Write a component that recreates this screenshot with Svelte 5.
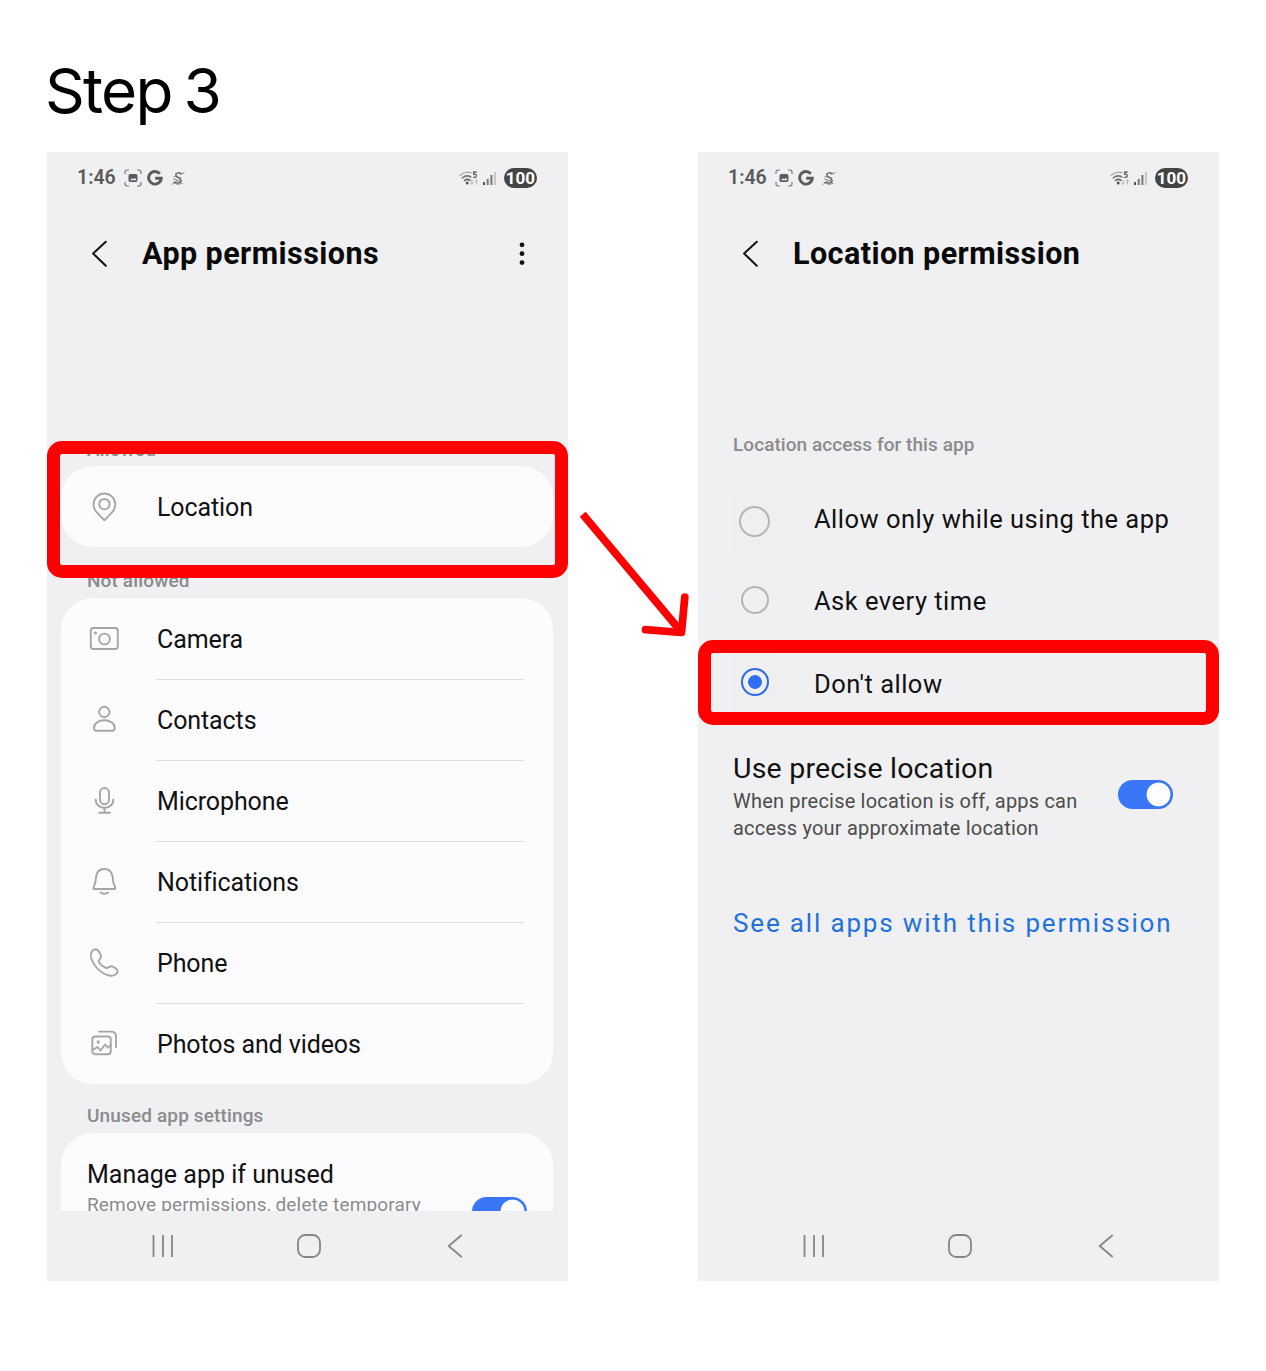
<script>
  const denied = [
    { icon: 'camera', label: 'Camera' },
    { icon: 'contacts', label: 'Contacts' },
    { icon: 'microphone', label: 'Microphone' },
    { icon: 'bell', label: 'Notifications' },
    { icon: 'phone', label: 'Phone' },
    { icon: 'photos', label: 'Photos and videos' }
  ];
</script>

{#snippet statusBar()}
  <div class="status">
    <span class="time">1:46</span>
    <svg class="shot" width="18" height="18" viewBox="0 0 18 18" fill="none" stroke="#777" stroke-width="1.2">
      <path d="M1 5V3.200Q1 1 3.200 1H5M13 1h1.800Q17 1 17 3.200V5M17 13v1.800Q17 17 14.800 17H13M5 17H3.200Q1 17 1 14.800V13" />
      <rect x="4.500" y="5" width="9" height="8" rx="1.800" fill="#5b5b5b" stroke="none" />
      <path d="M6 11.200l2-2 1.300 1.100 1.500-1.500 1.700 2.400z" fill="#f0f0f2" stroke="none" />
    </svg>
    <svg class="google" width="16" height="16" viewBox="0 0 16 16" fill="none" stroke="#5b5b5b" stroke-width="2.900">
      <path d="M12.800 3.700A6.300 6.300 0 1 0 14.300 8.200H8.200" />
    </svg>
    <svg class="script-s" width="14" height="15" viewBox="0 0 14 15" fill="none" stroke="#6b6b6b" stroke-linecap="round">
      <path d="M10 3C8.500 1.300 5 1.500 4.700 3.700S9.800 6.700 10 9.300 6.500 12.800 3 11.500" stroke-width="1.500" />
      <path d="M1 13.500Q3.500 10 6.500 9.800M2.500 8l8 2.500M9 2.500l4-.5M3 5.500l7 1.500M6 13.500l5-1" stroke-width=".8" />
    </svg>
    <span class="grow"></span>
    <svg class="wifi" width="21" height="15" viewBox="0 0 21 15" fill="none" stroke-linecap="round">
      <path d="M1 4.500Q6.500-.5 12 1.800" stroke="#a5a5a5" stroke-width="1.300" />
      <path d="M3.300 7Q7.500 3.300 11.800 6" stroke="#777" stroke-width="1.500" />
      <path d="M5.500 9.500Q8.200 7.300 11 9.400" stroke="#666" stroke-width="1.500" />
      <circle cx="8.200" cy="12" r="1.500" fill="#555" />
      <path d="M17.300 1H14.700V3.300Q17.400 2.900 17.400 4.800T14.400 6.300" stroke="#666" stroke-width="1.300" />
      <path d="M13 9v4M11.600 11.800L13 13.300l1.400-1.500M17.500 13.300V9M16.100 10.300L17.500 8.800l1.400 1.500" stroke="#b5b5b5" stroke-width="1" />
    </svg>
    <svg class="signal" width="14" height="15" viewBox="0 0 14 15">
      <rect x="0" y="11" width="2" height="3" fill="#555" />
      <rect x="3.700" y="8" width="2" height="6" fill="#777" />
      <rect x="7.400" y="4" width="2" height="10" fill="#777" />
      <rect x="11" y="1" width="2" height="13" fill="#c6c6c8" />
    </svg>
    <span class="battery">100</span>
  </div>
{/snippet}

{#snippet header(title, menu)}
  <div class="header">
    <svg class="back" width="18" height="30" viewBox="0 0 18 30" fill="none" stroke="#111" stroke-width="2" stroke-linecap="round" stroke-linejoin="round">
      <path d="M14.800 2.800L2.100 14.500l12.700 12.200" />
    </svg>
    <h2>{title}</h2>
    {#if menu}
      <svg class="menu" width="6" height="24" viewBox="0 0 6 24" fill="#111">
        <circle cx="3" cy="2.800" r="2.400" /><circle cx="3" cy="11.700" r="2.400" /><circle cx="3" cy="20.600" r="2.400" />
      </svg>
    {/if}
  </div>
{/snippet}

{#snippet navBar()}
  <div class="nav">
    <svg width="24" height="26" viewBox="0 0 24 26" stroke="#858585" stroke-width="1.800"><path d="M2.500 2v22M12 2v22M21 2v22" /></svg>
    <svg width="26" height="26" viewBox="0 0 26 26" fill="none" stroke="#858585" stroke-width="1.800"><rect x="2" y="2" width="22" height="22" rx="7.500" /></svg>
    <svg width="26" height="26" viewBox="0 0 26 26" fill="none" stroke="#858585" stroke-width="1.800"><path d="M19.700 2L6.700 13l13 11" /></svg>
  </div>
{/snippet}

{#snippet icon(name)}
  <svg class="icon" width="32" height="32" viewBox="0 0 32 32" fill="none" stroke="#a6a6a8" stroke-width="1.900" stroke-linecap="round" stroke-linejoin="round">
    {#if name === 'location'}
      <path d="M16.400 30.300L8.400 21.800A10.900 10.900 0 1 1 24.400 21.800Z" />
      <circle cx="16.400" cy="14.200" r="5.200" />
    {:else if name === 'camera'}
      <rect x="2.800" y="6" width="27" height="21" rx="2.500" />
      <circle cx="16.500" cy="17" r="5.400" /><circle cx="7.500" cy="11" r=".6" fill="#a6a6a8" />
    {:else if name === 'contacts'}
      <circle cx="16.300" cy="9" r="5.200" />
      <path d="M16.300 17.300C10.300 17.300 6 20.500 6 25Q6 27.700 8.500 27.700H24Q26.800 27.700 26.800 25C26.800 20.500 22.300 17.300 16.300 17.300Z" />
    {:else if name === 'microphone'}
      <rect x="12" y="4" width="9" height="16.200" rx="4.500" />
      <path d="M7.700 15.500C7.700 26.500 25.300 26.500 25.300 15.500M16.500 23.700v5M11.300 28.700h10.500" />
    {:else if name === 'bell'}
      <path d="M16.300 4C10.800 4 8.300 8 8 12.500C7.800 18 6.500 19.500 5.500 22.500Q5 24 6.300 24H26.500Q27.700 24 27.200 22.500C26 19.500 24.900 18 24.700 12.500C24.400 8 21.800 4 16.300 4Z" />
      <path d="M12.500 27.500Q16.400 30 20.200 27.500" />
    {:else if name === 'phone'}
      <path d="M8 3.300C4 3.500 2 7.500 3 11.500C5.700 20.500 13.200 28 22.200 29.700C26.200 30.200 29.200 28.200 29.600 25.500C29.800 24 28.700 23 27.700 22.400L24.500 20.500C22 19 20.500 22.600 18.200 22C14.500 20.500 12.200 18.300 10.800 15.600C10.200 13.800 13.200 13 13 10.500C12.700 8.500 10.500 3.500 8 3.300Z" />
    {:else}
      <rect x="4.300" y="9.500" width="18.500" height="17.800" rx="3" />
      <path d="M11 4.600H22.800Q28 4.600 28 9.500V20M5 22.800L9.500 20 12.500 23.500 17.200 17.500 19.700 20.500 22.500 18.500" /><circle cx="10.200" cy="15" r=".7" fill="#a6a6a8" />
    {/if}
  </svg>
{/snippet}

<main>
  <h1>Step 3</h1>
  <div class="phones">
    <section class="phone">
      {@render statusBar()}
      {@render header('App permissions', true)}
      <div class="scroll">
        <div class="label allowed">Allowed</div>
        <div class="card">
          <div class="row">{@render icon('location')}<div class="cell">Location</div></div>
        </div>
        <div class="label not-allowed">Not allowed</div>
        <div class="card">
          {#each denied as item}
            <div class="row">{@render icon(item.icon)}<div class="cell">{item.label}</div></div>
          {/each}
        </div>
        <div class="label unused">Unused app settings</div>
        <div class="card manage">
          <div>
            <div class="manage-title">Manage app if unused</div>
            <div class="manage-sub">Remove permissions, delete temporary</div>
          </div>
          <span class="toggle"></span>
        </div>
      </div>
      {@render navBar()}
      <div class="highlight location-box"></div>
    </section>

    <section class="phone">
      {@render statusBar()}
      {@render header('Location permission', false)}
      <div class="scroll">
        <div class="label access">Location access for this app</div>
        <div class="option first"><span class="radio-cell tinted"><span class="radio large"></span></span><span>Allow only while using the app</span></div>
        <div class="option second"><span class="radio-cell"><span class="radio"></span></span><span>Ask every time</span></div>
        <div class="option third"><span class="radio-cell tinted"><span class="radio on"></span></span><span>Don't allow</span></div>
        <div class="precise">
          <div>
            <div class="precise-title">Use precise location</div>
            <div class="precise-sub">When precise location is off, apps can<br />access your approximate location</div>
          </div>
          <span class="toggle"></span>
        </div>
        <div class="link">See all apps with this permission</div>
      </div>
      {@render navBar()}
      <div class="highlight deny-box"></div>
    </section>
  </div>
  <svg class="arrow" width="120" height="140" viewBox="575 505 120 140" fill="none" stroke="#f00" stroke-width="7.700">
    <path d="M582.700 514.200L681 631.500" />
    <path d="M645.500 629.700L681.500 632.500L684.800 597" stroke-linecap="round" stroke-linejoin="round" />
  </svg>
</main>

<style>
  :global(body) { background: #fff; }
  main { position: relative; width: 1266px; height: 1371px; overflow: hidden; font-family: Roboto, "Liberation Sans", sans-serif; color: #111; }
  h1, h2 { margin: 0; }
  h1 { box-sizing: border-box; height: 152px; padding: 53px 0 0 45px; font: 400 62px/75px Inter, sans-serif; letter-spacing: -1.700px; word-spacing: -4px; color: #000; }
  .phones { display: flex; gap: 130px; padding-left: 47px; }
  .phone { position: relative; display: flex; flex-direction: column; width: 521px; height: 1129px; background: #f0f0f2; white-space: nowrap; }
  .status { display: flex; align-items: center; height: 52px; padding: 0 31px 0 30px; box-sizing: border-box; color: #5b5b5b; }
  .time { width: 47px; font-size: 19.500px; font-weight: 600; line-height: 24px; }
  .shot { margin-right: 5px; }
  .google { margin-right: 8px; }
  .grow { flex: 1; }
  .wifi { margin-right: 3px; }
  .signal { margin-right: 7px; }
  .battery { width: 33px; height: 20px; border-radius: 10px; background: #444; color: #fff; font-size: 17px; font-weight: 700; line-height: 20px; text-align: center; }
  .header { display: flex; align-items: center; height: 100px; padding: 0 43px 0 44px; }
  .back { margin-right: 33px; }
  h2 { flex: 1; font-size: 30.500px; font-weight: 700; line-height: 40px; letter-spacing: .43px; color: #0a0a0a; }
  .scroll { flex: 1; min-height: 0; overflow: hidden; }
  .label { box-sizing: border-box; padding-left: 40px; font-size: 19px; font-weight: 500; letter-spacing: .14px; line-height: 24px; color: #8b8b8d; }
  .allowed { height: 162px; padding-top: 134px; }
  .not-allowed { height: 51px; padding-top: 22px; }
  .unused { height: 49px; padding-top: 20px; }
  .card { margin: 0 15px 0 14px; border-radius: 32px; background: #fcfcfe; }
  .row { display: flex; align-items: center; height: 81px; padding: 0 29px 0 27px; }
  .icon { margin: -2px 36px 0 0; }
  .cell { flex: 1; height: 81px; box-sizing: border-box; padding-left: 1px; font-size: 25px; letter-spacing: -.1px; line-height: 84px; }
  .row + .row .cell { border-top: 1px solid #dedee0; line-height: 82px; }
  .manage { display: flex; justify-content: space-between; height: 140px; box-sizing: border-box; padding: 26px 26px 0; }
  .manage-title { font-size: 25px; line-height: 32px; }
  .manage-sub { font-size: 19px; letter-spacing: .16px; line-height: 28px; color: #8b8b8d; }
  .toggle { width: 55px; height: 29px; box-sizing: border-box; border-radius: 15px; background: radial-gradient(circle at 40.500px 14.500px, #fff 11.500px, #3a76f8 12.300px); }
  .manage .toggle { margin-top: 38px; }
  .nav { display: flex; align-items: center; justify-content: space-between; height: 70px; padding: 0 100px 0 104px; }
  .highlight { position: absolute; left: 0; width: 521px; box-sizing: border-box; border: 13px solid #f00; border-radius: 15px; }
  .location-box { top: 289px; height: 137px; }
  .deny-box { top: 488px; height: 85px; }
  .access { height: 174px; padding: 129px 0 0 35px; letter-spacing: .06px; }
  .option { display: flex; align-items: center; padding-left: 34px; font-size: 25.500px; letter-spacing: .49px; }
  .first { height: 82px; }
  .second { height: 82px; }
  .third { height: 84px; }
  .radio-cell { display: flex; align-items: center; justify-content: center; width: 45px; height: 59px; margin-right: 37px; }
  .first .radio-cell { margin-top: 5px; }
  .second .radio-cell, .third .radio-cell { margin-top: -3px; padding-left: 1px; width: 44px; }
  .third .radio-cell { margin-top: -5px; }
  .tinted { background: #efeff0; }
  .radio { box-sizing: border-box; width: 28px; height: 28px; border: 2px solid #b5b5b7; border-radius: 50%; }
  .large { width: 31px; height: 31px; }
  .on { border: 2.500px solid #2e68ec; background: radial-gradient(circle, #2f6ff5 6.500px, transparent 7.200px); }
  .precise { display: flex; justify-content: space-between; padding: 25px 46px 0 35px; height: 181px; box-sizing: border-box; }
  .precise-title { font-size: 28.500px; letter-spacing: .2px; line-height: 36px; }
  .precise-sub { padding-top: 1px; font-size: 20px; letter-spacing: .2px; line-height: 27px; color: #4c4c4c; }
  .precise .toggle { margin-top: 29px; }
  .link { padding-left: 35px; font-size: 26px; letter-spacing: 1.840px; color: #2272dc; line-height: 32px; }
  .arrow { position: absolute; left: 575px; top: 505px; }
</style>
